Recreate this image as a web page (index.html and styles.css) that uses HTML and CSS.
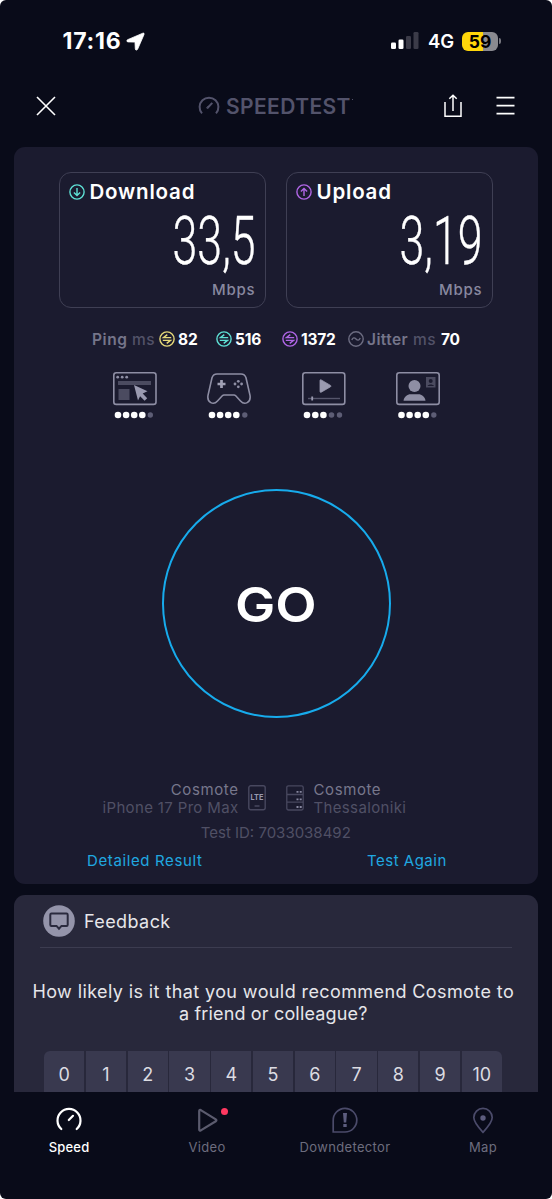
FILE: index.html
```html
<!DOCTYPE html>
<html lang="en">
<head>
<meta charset="utf-8">
<title>Speedtest</title>
<link rel="stylesheet" href="styles.css">
</head>
<body>
<div class="phone">
  <div class="status">
    <span class="time">17:16</span>
    <svg class="loc" width="19" height="19" viewBox="0 0 19 19"><path d="M16.800 1.200 1.600 7.700c-1.200.6-1 2.100.4 2.200l6.400.2c.5 0 .6.2.6.6l.3 6.200c.1 1.400 1.700 1.600 2.300.4L18 2.500c.4-1-.2-1.700-1.200-1.300Z" fill="#fff" stroke="#fff" stroke-width=".8" stroke-linejoin="round"/></svg>
    <svg class="signal" width="28" height="18" viewBox="0 0 28 18"><rect x="0" y="10.500" width="5" height="6.500" rx="1.300" fill="#fff"/><rect x="7.500" y="7.500" width="5" height="9.500" rx="1.300" fill="#fff"/><rect x="15" y="4" width="5" height="13" rx="1.300" fill="#3b3b48"/><rect x="22.500" y="0" width="5" height="17" rx="1.300" fill="#3b3b48"/></svg>
    <span class="net">4G</span>
    <span class="battery"><span class="pct">59</span></span><span class="nub"></span>
  </div>

  <div class="header">
    <svg class="close" width="20" height="20" viewBox="0 0 20 20"><path d="M1 1 19 19M19 1 1 19" stroke="#fff" stroke-width="1.600"/></svg>
    <div class="logo">
      <svg width="22" height="20" viewBox="0 0 22 20" fill="none" stroke="#53536b"><path d="M4 17.300A9.400 9.400 0 1 1 18 17.300" stroke-width="2"/><path d="M9.600 11.800 14.300 6.900" stroke-width="2"/><circle cx="9.500" cy="11.700" r=".8"/></svg>
      <span class="brand">SPEEDTEST</span><i class="tm"></i>
    </div>
    <svg class="share" width="18" height="24" viewBox="0 0 18 24" fill="none" stroke="#fff" stroke-width="1.500"><path d="M1 8v14.300h16V8M9 17V1.500M5.300 4.800 9 1.200l3.700 3.600"/></svg>
    <svg class="menu" width="19" height="20" viewBox="0 0 19 20"><path d="M.5 1.600h18M.5 9.600h18M.5 17.600h18" stroke="#fff" stroke-width="1.700"/></svg>
  </div>

  <main class="result">
    <div class="speeds">
      <section class="speed">
        <div class="speed-title"><svg width="16" height="16" viewBox="0 0 16 16" fill="none" stroke="#5ee0d5" stroke-width="1.400"><circle cx="8" cy="8" r="7.100"/><path d="M8 4v7.500M4.900 8.400 8 11.500l3.100-3.100"/></svg><span>Download</span></div>
        <div class="value">33,5</div>
        <div class="unit">Mbps</div>
      </section>
      <section class="speed">
        <div class="speed-title"><svg width="16" height="16" viewBox="0 0 16 16" fill="none" stroke="#b066e6" stroke-width="1.400"><circle cx="8" cy="8" r="7.100"/><path d="M8 12V4.500M4.900 7.600 8 4.500l3.100 3.100"/></svg><span>Upload</span></div>
        <div class="value">3,19</div>
        <div class="unit">Mbps</div>
      </section>
    </div>

    <div class="latency">
      <div class="lat"><span class="dim ping">Ping</span><span class="ms">ms</span>
        <svg class="ic yellow" width="16" height="16" viewBox="0 0 16 16"><circle cx="8" cy="8" r="7.100"/><path d="M12.200 6.600H4.500L8.300 3.600M3.800 9.400H11.500L7.700 12.400"/></svg><b>82</b></div>
      <div class="lat"><svg class="ic teal" width="16" height="16" viewBox="0 0 16 16"><circle cx="8" cy="8" r="7.100"/><path d="M12.200 6.600H4.500L8.300 3.600M3.800 9.400H11.500L7.700 12.400"/></svg><b>516</b></div>
      <div class="lat"><svg class="ic violet" width="16" height="16" viewBox="0 0 16 16"><circle cx="8" cy="8" r="7.100"/><path d="M12.200 6.600H4.500L8.300 3.600M3.800 9.400H11.500L7.700 12.400"/></svg><b>1372</b></div>
      <div class="lat"><svg class="ic gray" width="16" height="16" viewBox="0 0 16 16"><circle cx="8" cy="8" r="7.200"/><path d="M3.800 9C4.800 6.300 6.500 6.300 8 8s3.200 1.700 4.200-1"/></svg><span class="dim jit">Jitter</span><span class="ms">ms</span><b>70</b></div>
    </div>

    <div class="apps">
      <svg width="44" height="48" viewBox="0 0 44 48"><rect x=".8" y=".8" width="42.200" height="31.600" rx="2.500" fill="none" stroke="#8e8ea4" stroke-width="1.600"/><g fill="#8e8ea4"><circle cx="4.700" cy="5.200" r="1.400"/><circle cx="9.200" cy="5.200" r="1.400"/><circle cx="13.700" cy="5.200" r="1.400"/></g><path d="M5 9h33v4H5zM5.500 17h11v11h-11z" fill="#4b4b60"/><path d="m21 13 13.500 6.200-4.800 2.400 4.500 4.700-2.600 2.500-4.500-4.600-2.100 4.400z" fill="#9a9ab0"/><g fill="#fff"><circle cx="5" cy="43" r="3.300"/><circle cx="13.100" cy="43" r="3.300"/><circle cx="21.200" cy="43" r="3.300"/><circle cx="29.300" cy="43" r="3.300"/></g><circle cx="37.300" cy="43" r="2.700" fill="#5d5d75"/></svg>
      <svg width="44" height="48" viewBox="0 0 44 48"><path d="M10 2h24c2.500 0 4.200 1.400 5 3.800l4 17.500c1.200 7.500-5.500 10.200-9.500 5.700L28.700 23.800c-.5-.5-1-.8-1.700-.8H17c-.7 0-1.200.3-1.700.8L10.500 29C6.500 33.500-.2 30.800 1 23.300L5 5.800C5.800 3.400 7.500 2 10 2Z" fill="none" stroke="#8e8ea4" stroke-width="1.600"/><path d="M14.500 8v8M10.500 12h8" stroke="#a0a0b4" stroke-width="2.700"/><g fill="#8e8ea4"><circle cx="31.300" cy="9.300" r="1.400"/><circle cx="28" cy="12" r="1.400"/><circle cx="34.600" cy="12" r="1.400"/><circle cx="31.300" cy="14.800" r="1.400"/></g><g fill="#fff"><circle cx="5" cy="43" r="3.300"/><circle cx="13.100" cy="43" r="3.300"/><circle cx="21.200" cy="43" r="3.300"/><circle cx="29.300" cy="43" r="3.300"/></g><circle cx="37.800" cy="43" r="2.700" fill="#5d5d75"/></svg>
      <svg width="44" height="48" viewBox="0 0 44 48"><rect x=".8" y=".8" width="42" height="31.600" rx="2.500" fill="none" stroke="#8e8ea4" stroke-width="1.600"/><path d="M18 8.500v11c0 .8.600 1 1.200.7l9.300-5.400c.6-.4.600-1 0-1.400l-9.300-5.500c-.6-.4-1.200-.2-1.200.6z" fill="#9a9ab0" stroke="#9a9ab0" stroke-width=".8"/><path d="M6 26.500h32" stroke="#55556b" stroke-width="1.400"/><path d="M10.200 24.500v4" stroke="#9a9ab0" stroke-width="1.800"/><g fill="#fff"><circle cx="5" cy="43" r="3.300"/><circle cx="13.300" cy="43" r="3.300"/><circle cx="21.400" cy="43" r="3.300"/></g><g fill="#5d5d75"><circle cx="29.500" cy="43" r="2.800"/><circle cx="37.500" cy="43" r="2.700"/></g></svg>
      <svg width="44" height="48" viewBox="0 0 44 48"><rect x=".8" y=".8" width="42.400" height="31.600" rx="2.500" fill="none" stroke="#8e8ea4" stroke-width="1.600"/><circle cx="18.500" cy="14" r="6" fill="#8e8ea4"/><path d="M7.500 28.800c.5-4 4-6.500 7-6.500h8c3 0 6.500 2.500 7 6.500z" fill="#8e8ea4"/><path d="M30 5h9.500v10.500H30z" fill="#4b4b60"/><circle cx="34.700" cy="9" r="2" fill="#1b1b2f"/><path d="M31.500 14c1-2 5.500-2 6.500 0z" fill="#1b1b2f"/><g fill="#fff"><circle cx="5.500" cy="43" r="3.300"/><circle cx="13.600" cy="43" r="3.300"/><circle cx="21.700" cy="43" r="3.300"/><circle cx="29.800" cy="43" r="3.300"/></g><circle cx="37.800" cy="43" r="2.700" fill="#5d5d75"/></svg>
    </div>

    <button class="go"><span>GO</span></button>

    <div class="hosts">
      <div class="host left"><div class="name">Cosmote</div><div class="sub">iPhone 17 Pro Max</div></div>
      <svg class="h-phone" width="18" height="26" viewBox="0 0 18 26"><rect x=".8" y=".8" width="16.400" height="24" rx="2" fill="none" stroke="#48485f" stroke-width="1.400"/><path d="M6.500 21h5" stroke="#55556b" stroke-width="1.200"/><text x="2.600" y="14.800" textLength="12.800" lengthAdjust="spacingAndGlyphs" class="lte">LTE</text></svg>
      <svg class="h-server" width="18" height="26" viewBox="0 0 18 26"><path d="M2.500.8h13c1 0 1.700.7 1.700 1.700v20.800c0 1-.7 1.700-1.700 1.700h-13c-1 0-1.700-.7-1.700-1.700V2.500C.8 1.500 1.500.8 2.500.8ZM.8 9.500h16.400M.8 17.200h16.400" fill="none" stroke="#48485f" stroke-width="1.300"/><path d="M10.500 6.800h2m1.200 0h2M10.500 14.300h2m1.200 0h2M10.500 22h2m1.200 0h2" stroke="#8888a0" stroke-width="1.800"/></svg>
      <div class="host"><div class="name">Cosmote</div><div class="sub">Thessaloniki</div></div>
    </div>
    <div class="testid">Test ID: 7033038492</div>
    <div class="links"><a class="detail">Detailed Result</a><a class="again">Test Again</a></div>
  </main>

  <section class="feedback">
    <div class="fb-head">
      <svg width="32" height="32" viewBox="0 0 32 32"><circle cx="16" cy="16" r="15.800" fill="#9494aa"/><path d="M8.500 8.500h15c.7 0 1.200.5 1.200 1.200v10c0 .7-.5 1.200-1.200 1.200h-5L16 23.700l-2.500-2.800h-5c-.7 0-1.200-.5-1.200-1.200v-10c0-.7.5-1.200 1.200-1.200Z" fill="none" stroke="#2a2a3e" stroke-width="2"/></svg>
      <span>Feedback</span>
    </div>
    <p class="question">How likely is it that you would recommend Cosmote to<br><span>a friend or colleague?</span></p>
    <div class="scale"><span>0</span><span>1</span><span>2</span><span>3</span><span>4</span><span>5</span><span>6</span><span>7</span><span>8</span><span>9</span><span>10</span></div>
  </section>

  <nav class="tabs">
    <a class="tab active"><svg width="28" height="28" viewBox="0 0 28 28" fill="none" stroke="#fff" stroke-width="2.200" stroke-linecap="round"><path d="M6.300 23A11.500 11.500 0 1 1 21.700 23M13.800 14 18 9.800"/></svg><span>Speed</span></a>
    <a class="tab"><svg width="28" height="28" viewBox="0 0 28 28" fill="none" stroke="#5b5b6e" stroke-width="2.200" stroke-linejoin="round"><path d="M6.200 5v18.500c0 1 .8 1.300 1.600.9l15-9.200c.8-.5.8-1.300 0-1.800l-15-9.300c-.8-.4-1.600-.1-1.600.9Z"/></svg><i class="badge"></i><span>Video</span></a>
    <a class="tab"><svg width="28" height="28" viewBox="0 0 28 28" fill="none" stroke="#4b4b6a" stroke-width="1.700"><path d="M2.200 26V14.500a11.800 11.800 0 1 1 11.800 11.500Z"/><path d="M12 7h4l-.8 9.500h-2.400zM12.300 18h3.400v3h-3.400z" fill="#5d5d7e" stroke="none"/></svg><span>Downdetector</span></a>
    <a class="tab"><svg width="28" height="28" viewBox="0 0 28 28" fill="none" stroke="#4b4b6a" stroke-width="1.700"><path d="M14 26.300C8.500 20.500 4.800 16 4.800 11.600a9.200 9.200 0 0 1 18.400 0C23.200 16 19.500 20.500 14 26.300Z"/><circle cx="14" cy="12" r="2.700" fill="#5d5d7e" stroke="none"/></svg><span>Map</span></a>
  </nav>
</div>
</body>
</html>
```
FILE: styles.css
```css
* { box-sizing: border-box; }
html { background: #fff; }
body { margin: 0; font-family: Inter, "Open Sans", sans-serif; color: #fff; }
.phone { display: flex; flex-direction: column; width: 552px; height: 1199px; background: #090b19; border-radius: 6px; overflow: hidden; }

.status { display: flex; align-items: center; height: 82px; padding-left: 62.500px; }
.time { width: 63.500px; font-size: 23px; font-weight: 700; letter-spacing: .8px; }
.signal { margin-left: 246px; }
.net { width: 26px; margin-left: 9px; font-size: 18.500px; font-weight: 600; }
.battery { display: flex; justify-content: center; align-items: center; width: 36px; height: 19px; margin-left: 8px; border-radius: 6px; background: linear-gradient(90deg, #ffd60a 59%, #8a8a90 59%); }
.pct { color: #000; font-size: 17.500px; font-weight: 700; }
.nub { width: 2px; height: 6px; margin-left: 1px; border-radius: 0 2px 2px 0; background: #77777f; }

.header { display: flex; align-items: center; height: 47px; padding-left: 36px; }
.logo { display: flex; align-items: center; gap: 6px; width: 160px; margin-left: 142px; }
.brand { margin-top: 1px; color: #53536b; font-size: 21px; font-weight: 600; letter-spacing: .4px; }
.tm { width: 1.500px; height: 1.500px; margin: -12px 0 0 -5px; background: #53536b; }
.share { margin-left: 86px; }
.menu { margin-left: 34px; }

.result { display: flex; flex-direction: column; flex: none; width: 524.500px; height: 737px; margin: 18px 0 0 13.500px; border-radius: 11px; background: #1b1b2f; }
.speeds { display: flex; gap: 20px; padding: 25px 0 0 45.500px; }
.speed { display: flex; flex-direction: column; width: 207px; height: 136px; padding: 7px 10px 0 9px; border: 1.500px solid #3f3f54; border-radius: 12px; }
.speed-title { display: flex; align-items: center; gap: 4.500px; height: 24px; font-size: 20.500px; font-weight: 600; letter-spacing: .8px; }
.speed-title span { margin-top: -1px; }
.value { flex: none; align-self: flex-end; height: 80px; margin: -2px 0; font: 300 66px/80px Roboto, sans-serif; -webkit-text-stroke: .4px #fff; transform: scaleX(.677); transform-origin: 100% 50%; }
.unit { margin-right: -.5px; color: #88889f; font-size: 15px; font-weight: 500; line-height: 20px; letter-spacing: .8px; text-align: right; }

.latency { display: grid; grid-template-columns: 124px 66px 66px 120px; padding: 21px 0 0 78.500px; }
.lat { display: flex; align-items: center; height: 20px; font-size: 15.500px; white-space: nowrap; }
.lat b { margin-left: 3px; font-weight: 700; letter-spacing: -.2px; }
.lat .ic { fill: none; stroke-width: 1.400; }
.ic.yellow { margin-left: 4px; stroke: #e6d97a; }
.ic.teal { stroke: #5ee0d5; }
.ic.violet { stroke: #b066e6; }
.ic.gray { stroke: #6d6d82; }
.dim { color: #75758a; font-weight: 600; letter-spacing: .6px; }
.ping { width: 40px; }
.ms { width: 23px; color: #525268; font-weight: 500; letter-spacing: .6px; }
.jit { width: 46px; margin-left: 3px; letter-spacing: .4px; }
.jit + .ms + b { margin-left: 5px; }

.apps { display: flex; gap: 50.500px; padding: 23px 0 0 99px; }
.go { display: flex; align-items: center; justify-content: center; flex: none; width: 229px; height: 229px; margin: 68.500px 0 0 148px; padding: 2px 0 0; border: 2px solid #17abec; border-radius: 50%; background: none; color: #fff; font: 600 48.500px Inter, sans-serif; }
.go span { transform: scaleX(1.11); }

.hosts { display: flex; height: 37px; margin-top: 63.500px; font-size: 15px; line-height: 18px; white-space: nowrap; }
.host.left { width: 225px; text-align: right; }
.name { color: #77778c; letter-spacing: .6px; }
.sub { color: #505065; letter-spacing: .35px; }
.h-phone { margin: 4px 0 0 9px; }
.h-server { margin: 4px 10px 0 20px; }
.lte { fill: #9999ae; font: 700 8px Inter, sans-serif; }
.testid { margin-top: 6px; color: #505065; font-size: 15px; line-height: 18px; text-align: center; }
.links { display: flex; margin-top: 10px; padding-left: 73.500px; color: #20a8e0; font-size: 15px; line-height: 18px; }
.detail { width: 280px; letter-spacing: .62px; }
.again { letter-spacing: .5px; }

.feedback { flex: 1; width: 524.500px; margin: 11px 0 0 13.500px; border-radius: 11px 11px 0 0; background: #28283b; overflow: hidden; }
.fb-head { display: flex; align-items: center; gap: 9.500px; height: 53px; margin: 0 26px; padding-left: 3px; border-bottom: 1.500px solid #3c3c50; color: #e6e6ea; font-size: 18px; letter-spacing: .4px; }
.question { margin: 33px 5px 0 0; color: #e6e6ea; font-size: 18px; line-height: 21.500px; letter-spacing: .4px; text-align: center; white-space: nowrap; }
.question span { letter-spacing: .16px; }
.scale { display: grid; grid-template-columns: repeat(11, 1fr); gap: 1.500px; width: 458px; height: 60px; margin: 27px 0 0 30.500px; border-radius: 6px; overflow: hidden; color: #dcdce2; font-size: 18px; line-height: 47px; text-align: center; }
.scale span { background: #39394f; }

.tabs { display: grid; grid-template-columns: repeat(4, 138px); flex: none; height: 107px; }
.tab { position: relative; display: flex; flex-direction: column; align-items: center; padding-top: 14px; color: #6d6d7e; font-size: 13px; line-height: 16px; letter-spacing: .35px; }
.tab span { margin-top: 5px; }
.tab.active { color: #fff; font-weight: 500; letter-spacing: .2px; }
.badge { position: absolute; left: 83px; top: 16px; width: 7px; height: 7px; border-radius: 50%; background: #ff3860; }
```
